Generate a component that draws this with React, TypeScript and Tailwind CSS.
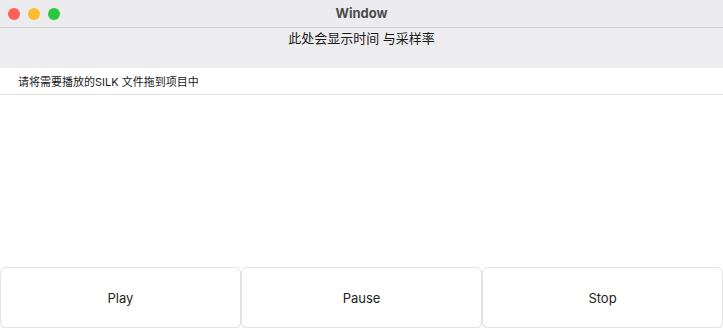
import React from 'react';

const font = { fontFamily: '"Inter", "Noto Sans CJK SC", sans-serif' };

const ControlButton: React.FC<{ label: string }> = ({ label }) => (
  <button className="flex-1 flex items-center justify-center pt-[2px] rounded-md border border-[#e4e4e4] bg-white text-[13px] text-[#222] shadow-[0_1px_1px_rgba(0,0,0,0.08)]">
    {label}
  </button>
);

export default function App() {
  return (
    <div className="w-[723px] h-[328px] flex flex-col bg-white overflow-hidden" style={font}>
      {/* Title bar */}
      <div className="relative h-[28px] flex items-center justify-center bg-[#ececef] border-b border-[#d2d2d4]">
        <div className="absolute left-[8px] top-[8px] flex gap-[8px]">
          <span className="w-[12px] h-[12px] rounded-full bg-[#fe5f57]" />
          <span className="w-[12px] h-[12px] rounded-full bg-[#febc2e]" />
          <span className="w-[12px] h-[12px] rounded-full bg-[#28c840]" />
        </div>
        <span className="text-[13px] font-bold text-[#4c4c4c]">Window</span>
      </div>

      {/* Status header */}
      <div className="h-[40px] flex justify-center bg-[#ededf0] pt-[1px]">
        <span className="text-[13px] text-[#1a1a1a] leading-[18px]">此处会显示时间 与采样率</span>
      </div>

      {/* Hint row */}
      <div className="h-[27px] flex items-center pt-[3px] px-[18px] border-b border-[#e2e2e2]">
        <span className="text-[11px] text-[#1a1a1a]">请将需要播放的SILK 文件拖到项目中</span>
      </div>

      {/* Drop area */}
      <div className="flex-1" />

      {/* Controls */}
      <div className="h-[61px] flex">
        <ControlButton label="Play" />
        <ControlButton label="Pause" />
        <ControlButton label="Stop" />
      </div>
    </div>
  );
}
